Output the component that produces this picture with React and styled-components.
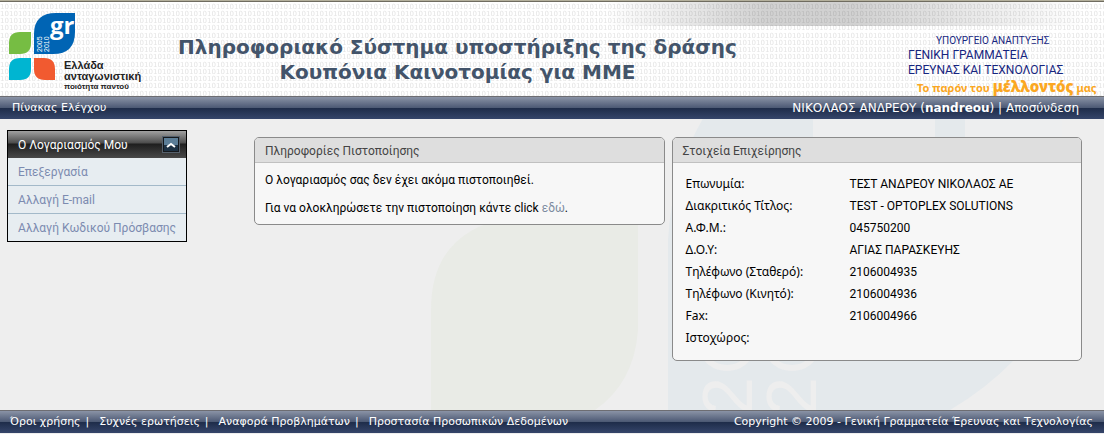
import React, { useState } from "react";
import styled, { createGlobalStyle, css } from "styled-components";

const wide = css`font-family: "DejaVu Sans", Verdana, sans-serif;`;
const narrow = css`font-family: Roboto, "Trebuchet MS", sans-serif;`;
const humanist = css`font-family: "Noto Sans", "Trebuchet MS", sans-serif;`;

const Global = createGlobalStyle`
  *, *::before, *::after { box-sizing: border-box; }
  body { margin: 0; background: #eeeeee; color: #000; ${narrow} font-size: 12px; line-height: 16px; }
  h1, h2, p, ul { margin: 0; padding: 0; }
  ul { list-style: none; }
`;

const Page = styled.div`
  min-height: 100vh;
  display: flex;
  flex-direction: column;
  padding-bottom: 1px;
`;

const Header = styled.header`
  position: relative;
  display: grid;
  grid-template-columns: 178px 1fr 196px;
  height: 96px;
  background: #fff;
  border-top: 1px solid #b4b09c;
  overflow: hidden;
  box-shadow: inset 0 1px 0 #6f6c60;
`;

const Texture = styled.svg`
  position: absolute;
  inset: 1px 0 0 0;
  width: 100%;
  height: 100%;
`;

const Shade = styled.div`
  position: absolute;
  top: 1px;
  right: 0;
  width: 45%;
  height: 24px;
  background: linear-gradient(90deg, rgba(0,0,0,0) 0%, rgba(0,0,0,0.18) 32%, rgba(0,0,0,0.18) 50%, rgba(0,0,0,0) 96%);
`;

const Logo = styled.a`
  position: relative;
  padding: 11px 0 0 8px;
  svg { display: block; }
`;

const Title = styled.h1`
  position: relative;
  ${wide}
  font-size: 20px;
  line-height: 25px;
  font-weight: bold;
  color: #43546a;
  text-align: center;
  padding-top: 34px;
  justify-self: start;
  white-space: nowrap;
`;

const Ministry = styled.div`
  position: relative;
  padding-top: 32px;
  line-height: 15px;
  color: #16257f;
  white-space: nowrap;
`;

const MinistryName = styled.div`
  padding-left: ${(p) => (p.$indent ? "28px" : "0")};
  font-size: ${(p) => (p.$indent ? "10px" : "12px")};
`;

const Slogan = styled.div`
  ${humanist}
  padding-left: 9px;
  color: #fba722;
  font-weight: bold;
  font-size: 11px;
  line-height: 16px;
  strong { font-size: 15px; }
`;

const Bar = styled.div`
  ${wide}
  display: flex;
  justify-content: space-between;
  height: 23px;
  padding: ${(p) => p.$pad};
  border-top: 1px solid #6d6d72;
  background: linear-gradient(#8a93a6 0, #4b5873 11px, #1e2c49 11px, #35456a 100%);
  color: #fff;
  font-size: 11px;
  line-height: 22px;
  white-space: nowrap;
  a { color: inherit; text-decoration: none; }
`;

const User = styled.span`
  font-size: 12px;
`;

const Main = styled.main`
  position: relative;
  flex: 1;
  display: grid;
  grid-template-columns: 180px minmax(0, 1fr);
  align-items: start;
  column-gap: 67px;
  padding: 11px 22px 49px 7px;
  overflow: hidden;
`;

const Panels = styled.div`
  position: relative;
  display: grid;
  grid-template-columns: repeat(2, minmax(0, 1fr));
  align-items: start;
  gap: 7px;
  padding-top: 7px;
`;

const Watermark = styled.svg`
  position: absolute;
  top: 0;
  left: 430px;
  width: 674px;
  height: 291px;
`;

const Menu = styled.nav`
  position: relative;
  border: 1px solid #000;
  background: #e7edf1;
`;

const MenuHead = styled.div`
  display: flex;
  align-items: center;
  justify-content: space-between;
  height: 27px;
  padding: 0 6px 0 10px;
  color: #fff;
  background: linear-gradient(#a0a0a0 0, #4c4c4c 12px, #1e1e1e 13px, #484848 100%);
`;

const Toggle = styled.button`
  display: flex;
  align-items: center;
  justify-content: center;
  width: 18px;
  height: 17px;
  padding: 0;
  border: 1px solid #55606c;
  outline: 1px solid #15181c;
  outline-offset: -2px;
  background: linear-gradient(#5b7d97 50%, #1c3144 50%);
`;

const MenuItem = styled.li`
  height: 28px;
  padding: 0 10px;
  line-height: 28px;
  border-bottom: 1px solid #a3b9c9;
  &:last-child { height: 27px; border-bottom: 0; }
  a { color: #7c8bb0; text-decoration: none; white-space: nowrap; }
`;

const Card = styled.section`
  border: 1px solid #8a8a8a;
  border-radius: 5px;
  background: #f7f7f7;
  overflow: hidden;
`;

const CardTitle = styled.h2`
  height: 25px;
  padding: 0 10px;
  border-bottom: 1px solid #c0c0c0;
  background: #dedede;
  color: #444;
  font-size: 12px;
  line-height: 26px;
  font-weight: normal;
`;

const Message = styled.div`
  display: grid;
  gap: 12px;
  padding: 9px 10px 8px;
  a { color: #7c8ba0; text-decoration: none; }
`;

const Details = styled.table`
  width: 100%;
  margin: 10px 0 11px;
  border-collapse: collapse;
  table-layout: fixed;
  th, td { padding: 0 0 0 13px; height: 22px; text-align: left; font-weight: normal; }
  th { width: 177px; ${humanist} }
  td { padding-left: 0; }
`;

const FooterLinks = styled.nav`
  display: flex;
  gap: 5px;
  a + span { margin-right: 5px; }
`;

const company = [
  ["Επωνυμία:", "ΤΕΣΤ ΑΝΔΡΕΟΥ ΝΙΚΟΛΑΟΣ ΑΕ"],
  ["Διακριτικός Τίτλος:", "TEST - OPTOPLEX SOLUTIONS"],
  ["Α.Φ.Μ.:", "045750200"],
  ["Δ.Ο.Υ:", "ΑΓΙΑΣ ΠΑΡΑΣΚΕΥΗΣ"],
  ["Τηλέφωνο (Σταθερό):", "2106004935"],
  ["Τηλέφωνο (Κινητό):", "2106004936"],
  ["Fax:", "2106004966"],
  ["Ιστοχώρος:", ""],
];

const menu = ["Επεξεργασία", "Αλλαγή E-mail", "Αλλαγή Κωδικού Πρόσβασης"];
const links = ["Όροι χρήσης", "Συχνές ερωτήσεις", "Αναφορά Προβλημάτων", "Προστασία Προσωπικών Δεδομένων"];

function LogoMark() {
  return (
    <svg width="140" height="82" viewBox="8 12 140 82" fontFamily="Liberation Sans, Arial, sans-serif">
      <path d="M34 53V34Q34 13 56 13H75V32Q75 54 53 54H34Z" fill="#0064b4" />
      <path d="M9 54V43Q9 32 20 32H31V43Q31 54 20 54Z" fill="#76bd43" />
      <path d="M9 80V69Q9 58 20 58H31V69Q31 80 20 80Z" fill="#00b5d1" />
      <path d="M34 58H44Q55 58 55 69V80H45Q34 80 34 69Z" fill="#f15a30" />
      <text x="50" y="34" fontSize="24" fontWeight="bold" fill="#fff" fontFamily="Open Sans, sans-serif">gr</text>
      <g fill="#fff" fontSize="7">
        <text transform="translate(42 52) rotate(-90)">2005</text>
        <text transform="translate(49 52) rotate(-90)">2010</text>
      </g>
      <g fill="#222" fontWeight="bold">
        <text x="64" y="69" fontSize="11">Ελλάδα</text>
        <text x="64" y="80" fontSize="11">ανταγωνιστική</text>
        <text x="64" y="89" fontSize="8">ποιότητα παντού</text>
      </g>
    </svg>
  );
}

export default function App() {
  const [open, setOpen] = useState(true);
  return (
    <Page>
      <Global />
      <Header>
        <Texture aria-hidden="true">
          <defs>
            <pattern id="bits" width="9" height="29" patternUnits="userSpaceOnUse">
              <g fontSize="7" fill="#e4e4e4" fontFamily="DejaVu Sans, sans-serif">
                {[7, 14, 21, 28].map((y) => <text key={y} x="0" y={y}>10</text>)}
              </g>
            </pattern>
          </defs>
          <rect width="100%" height="100%" fill="url(#bits)" />
        </Texture>
        <Shade />
        <Logo href="#" aria-label="Ελλάδα ανταγωνιστική"><LogoMark /></Logo>
        <Title>Πληροφοριακό Σύστημα υποστήριξης της δράσης<br />Κουπόνια Καινοτομίας για ΜΜΕ</Title>
        <Ministry>
          <MinistryName $indent>ΥΠΟΥΡΓΕΙΟ ΑΝΑΠΤΥΞΗΣ</MinistryName>
          <MinistryName>ΓΕΝΙΚΗ ΓΡΑΜΜΑΤΕΙΑ</MinistryName>
          <MinistryName>ΕΡΕΥΝΑΣ ΚΑΙ ΤΕΧΝΟΛΟΓΙΑΣ</MinistryName>
          <Slogan>Το παρόν του <strong>μέλλοντός</strong> μας</Slogan>
        </Ministry>
      </Header>
      <Bar $pad="0 25px 0 12px">
        <a href="#">Πίνακας Ελέγχου</a>
        <User>ΝΙΚΟΛΑΟΣ ΑΝΔΡΕΟΥ (<b>nandreou</b>) | <a href="#">Αποσύνδεση</a></User>
      </Bar>
      <Main>
        <Watermark viewBox="430 119 674 291" aria-hidden="true">
          <path d="M431 430V310Q431 222 530 215H638V330Q634 385 592 412V430Z" fill="#e9ebe6" />
          <path d="M668 420V240Q672 170 705 115H1062V280Q1050 330 1013 361Q985 390 945 413V420Z" fill="#e4e9ec" />
          <path d="M813 119H935V137H813ZM965 119H1062V137H965Z" fill="#edeeef" />
          <g fill="none" stroke="#eeeeee" strokeWidth="6">
            <ellipse cx="727" cy="350" rx="23" ry="18" />
            <ellipse cx="792" cy="350" rx="23" ry="18" />
          </g>
          <g fill="#eeeeee" fontSize="70" fontFamily="Liberation Sans, sans-serif">
            <text transform="translate(752 416) rotate(-90)">2</text>
            <text transform="translate(816 416) rotate(-90)">2</text>
          </g>
        </Watermark>
        <Menu>
          <MenuHead>
            <span>Ο Λογαριασμός Μου</span>
            <Toggle type="button" aria-label="Ο Λογαριασμός Μου" aria-expanded={open} onClick={() => setOpen(!open)}>
              <svg width="10" height="6" viewBox="0 0 10 6"><path d="M1 5L5 2L9 5" fill="none" stroke="#fff" strokeWidth="2" /></svg>
            </Toggle>
          </MenuHead>
          {open && <ul>{menu.map((m) => <MenuItem key={m}><a href="#">{m}</a></MenuItem>)}</ul>}
        </Menu>
        <Panels>
          <Card>
            <CardTitle>Πληροφορίες Πιστοποίησης</CardTitle>
            <Message>
              <p>Ο λογαριασμός σας δεν έχει ακόμα πιστοποιηθεί.</p>
              <p>Για να ολοκληρώσετε την πιστοποίηση κάντε click <a href="#">εδώ</a>.</p>
            </Message>
          </Card>
          <Card>
            <CardTitle>Στοιχεία Επιχείρησης</CardTitle>
            <Details>
              <tbody>
                {company.map(([k, v]) => <tr key={k}><th scope="row">{k}</th><td>{v}</td></tr>)}
              </tbody>
            </Details>
          </Card>
        </Panels>
      </Main>
      <Bar as="footer" $pad="0 11px 0 10px">
        <FooterLinks>
          {links.map((l, i) => (
            <React.Fragment key={l}><a href="#">{l}</a>{i < links.length - 1 && <span>|</span>}</React.Fragment>
          ))}
        </FooterLinks>
        <span>Copyright © 2009 - Γενική Γραμματεία Έρευνας και Τεχνολογίας</span>
      </Bar>
    </Page>
  );
}
